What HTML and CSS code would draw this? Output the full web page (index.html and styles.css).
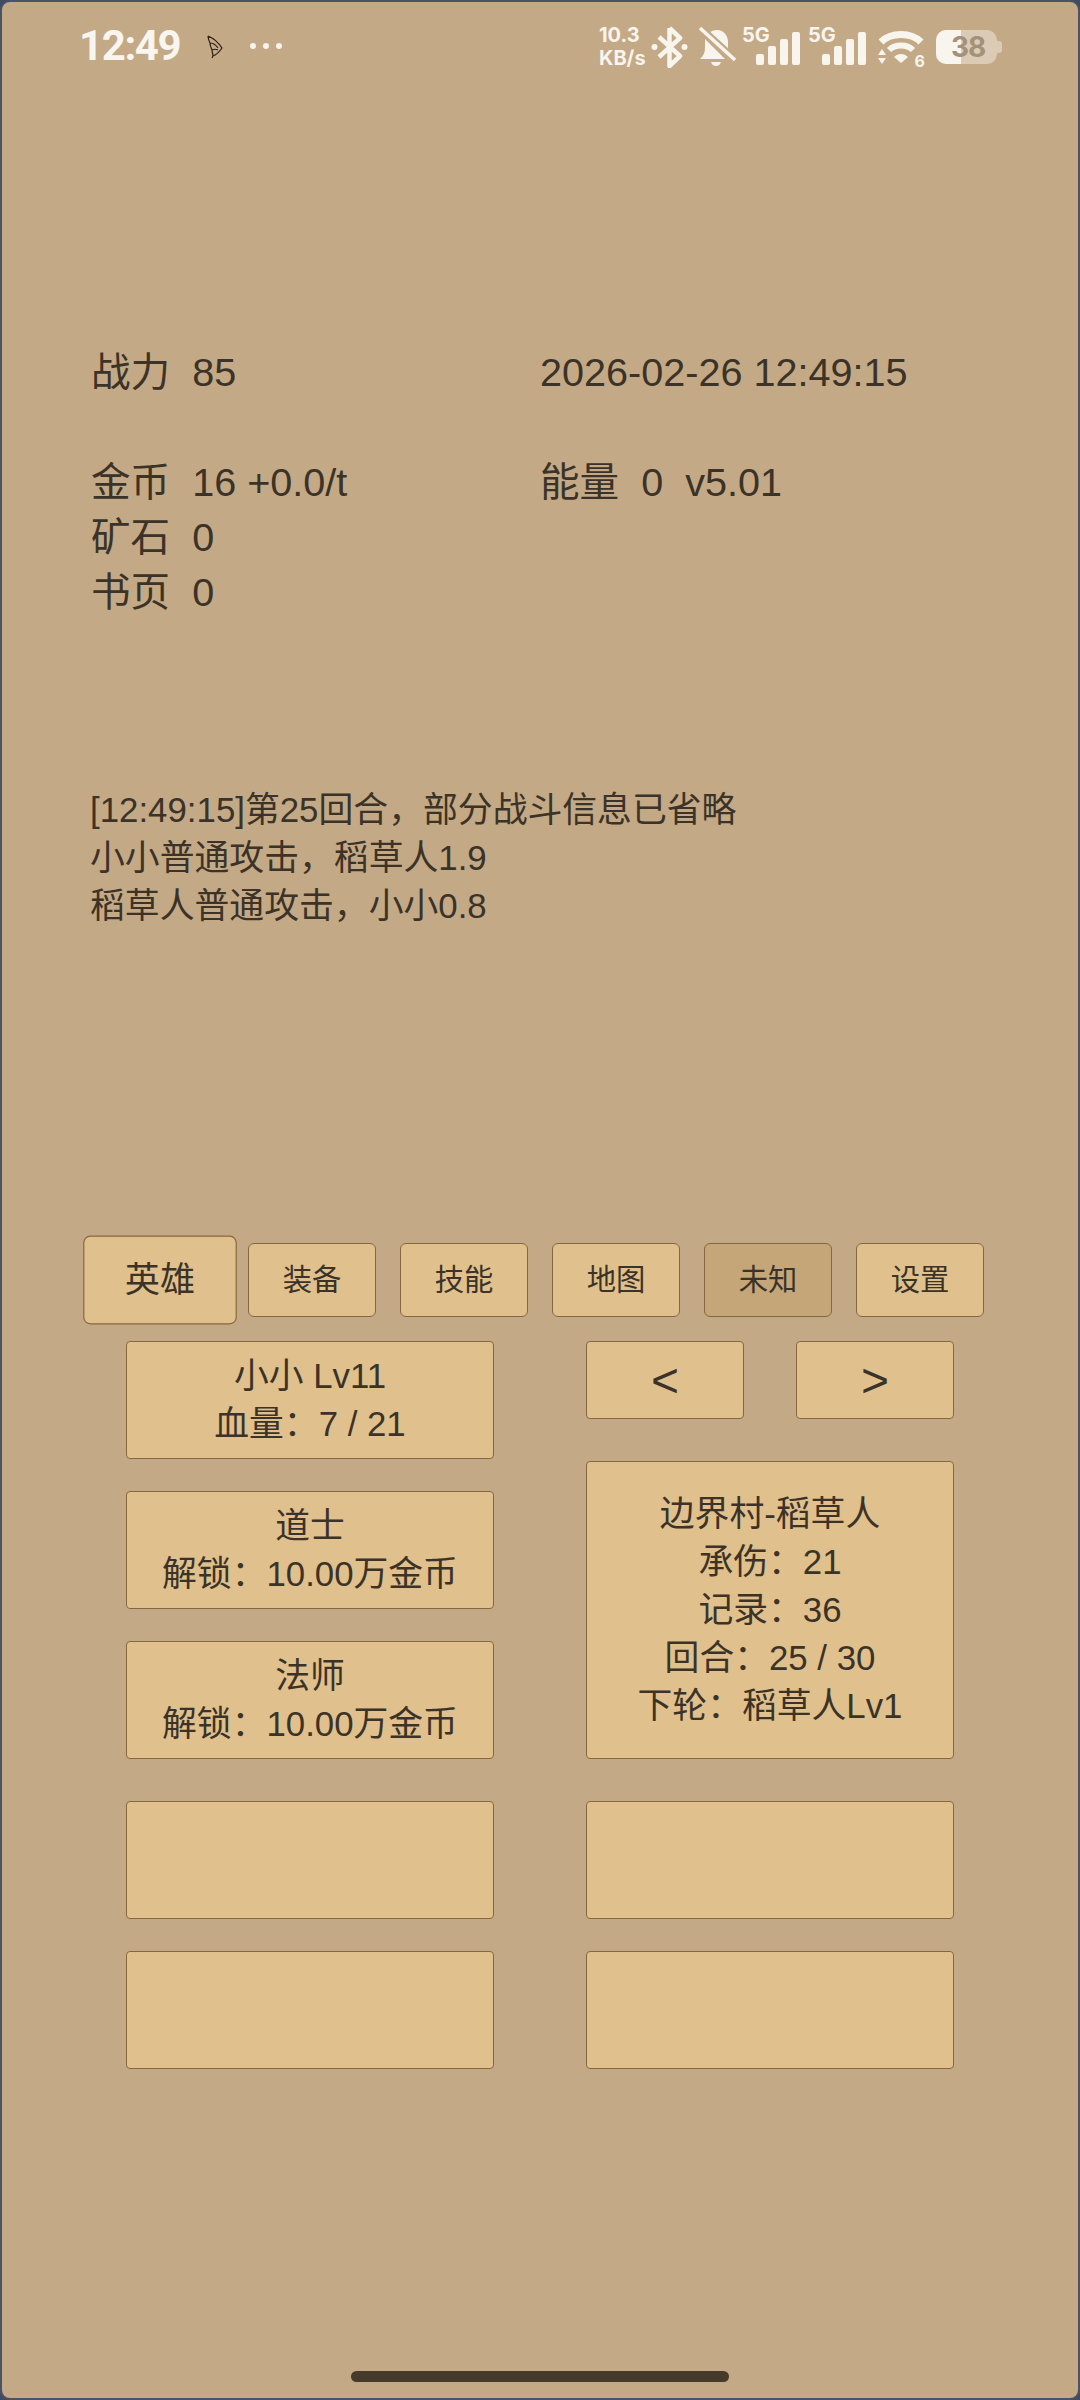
FILE: index.html
```html
<!DOCTYPE html>
<html lang="zh-CN">

<head>
    <meta charset="UTF-8">
    <meta name="viewport" content="width=device-width, initial-scale=1.0">
    <title>小小放置</title>
    <link rel="stylesheet" href="styles.css">
</head>

<body>
    <div class="screen">
        <!-- Status bar -->
        <div class="status-bar">
            <div class="status-left">
                <span class="clock">12:49</span>
                <svg class="wing" width="16" height="24" viewBox="0 0 16 24">
                    <path d="M1 1 C6 3 11 7 15 13 C13 16 11 19 6 21 L5 23 M1 1 C1 4 2 6 3 8 C3 11 4 13 5 15 C5 17 6 19 6 21 M3 8 C6 8 9 10 11 13 M5 15 C7 14 9 14 11 15" fill="none" stroke="#2b2116" stroke-width="1.2"/>
                </svg>
                <div class="dots"><i></i><i></i><i></i></div>
            </div>
            <div class="status-right">
                <div class="speed"><span>10.3</span><span>KB/s</span></div>
                <svg class="icon-bt" width="37" height="42" viewBox="0 0 37 42">
                    <path d="M18.500 2 L18.500 40 L29 30 L8 11 M18.500 2 L29 12 L8 31" fill="none" stroke="#f8f4ee" stroke-width="4.500" stroke-linejoin="round"/>
                    <circle cx="3.500" cy="21" r="3" fill="#f8f4ee"/>
                    <circle cx="33.500" cy="21" r="3" fill="#f8f4ee"/>
                </svg>
                <svg class="icon-bell" width="37" height="42" viewBox="0 0 37 42">
                    <path d="M18 4 C25 4 29 10 29 16 L29 26 L10 7 C12 5 15 4 18 4 Z M6 13 L26 33 L1 33 C4 30 6 27 6 22 Z M12 36 L22 36 C21 39 19 40 17 40 C15 40 13 39 12 36 Z" fill="#f8f4ee"/>
                    <path d="M1 2 L36 34" stroke="#c4a986" stroke-width="8"/>
                    <path d="M1 2 L36 34" stroke="#f8f4ee" stroke-width="3.500"/>
                </svg>
                <div class="signal">
                    <span class="net">5G</span>
                    <div class="bars"><i class="b1"></i><i class="b2"></i><i class="b3"></i><i class="b4"></i></div>
                </div>
                <div class="signal">
                    <span class="net">5G</span>
                    <div class="bars"><i class="b1"></i><i class="b2"></i><i class="b3"></i><i class="b4"></i></div>
                </div>
                <div class="wifi">
                    <svg width="46" height="36" viewBox="0 0 46 36">
                        <path d="M3 13 C13 3 33 3 43 13" fill="none" stroke="#f8f4ee" stroke-width="7"/>
                        <path d="M11 21 C17 15 29 15 35 21" fill="none" stroke="#f8f4ee" stroke-width="6"/>
                        <path d="M16 28 C20 24 26 24 30 28 L23 34 Z" fill="#f8f4ee"/>
                        <path d="M0 26 L4 20 L8 26 Z M0 29 L8 29 L4 35 Z" fill="#f8f4ee"/>
                    </svg>
                    <span class="wifi-num">6</span>
                </div>
                <div class="battery">
                    <div class="battery-fill"></div>
                    <span class="battery-num">38</span>
                    <div class="battery-tip"></div>
                </div>
            </div>
        </div>

        <!-- Stats -->
        <div class="stats">
            <div class="stat-col">
                <div>战力&nbsp;&nbsp;85</div>
                <div>&nbsp;</div>
                <div>金币&nbsp;&nbsp;16 +0.0/t</div>
                <div>矿石&nbsp;&nbsp;0</div>
                <div>书页&nbsp;&nbsp;0</div>
            </div>
            <div class="stat-col">
                <div>2026-02-26 12:49:15</div>
                <div>&nbsp;</div>
                <div>能量&nbsp;&nbsp;0&nbsp;&nbsp;v5.01</div>
            </div>
        </div>

        <!-- Battle log -->
        <div class="log">
            <div>[12:49:15]第25回合，部分战斗信息已省略</div>
            <div>小小普通攻击，稻草人1.9</div>
            <div>稻草人普通攻击，小小0.8</div>
        </div>

        <!-- Tabs -->
        <div class="tabs">
            <button class="tab active">英雄</button>
            <button class="tab">装备</button>
            <button class="tab">技能</button>
            <button class="tab">地图</button>
            <button class="tab locked">未知</button>
            <button class="tab">设置</button>
        </div>

        <div class="panels">
            <div class="column">
                <div class="card">
                    <div>小小 Lv11</div>
                    <div>血量：7 / 21</div>
                </div>
                <div class="card">
                    <div>道士</div>
                    <div>解锁：10.00万金币</div>
                </div>
                <div class="card">
                    <div>法师</div>
                    <div>解锁：10.00万金币</div>
                </div>
                <div class="card spaced"></div>
                <div class="card"></div>
            </div>
            <div class="column">
                <div class="nav">
                    <button class="nav-btn">&lt;</button>
                    <button class="nav-btn">&gt;</button>
                </div>
                <div class="card stage spaced">
                    <div>边界村-稻草人</div>
                    <div>承伤：21</div>
                    <div>记录：36</div>
                    <div>回合：25 / 30</div>
                    <div>下轮：稻草人Lv1</div>
                </div>
                <div class="card spaced"></div>
                <div class="card"></div>
            </div>
        </div>

        <div class="home-bar"></div>
    </div>
</body>

</html>
```

FILE: styles.css
```css
* {
    box-sizing: border-box;
}

html,
body {
    margin: 0;
    padding: 0;
    background-color: #3f4a63;
}

body {
    font-family: "Liberation Sans", "Noto Sans CJK SC", sans-serif;
    color: #3b3327;
}

.screen {
    position: relative;
    width: 1080px;
    height: 2400px;
    padding-top: 2px;
    background-color: #c4a986;
    border: 2px solid #4a5266;
    border-radius: 10px;
    overflow: hidden;
}

/* Status bar */
.status-bar {
    display: flex;
    justify-content: space-between;
    align-items: flex-start;
    height: 70px;
    padding: 19px 81px 0 77px;
    color: #f8f4ee;
}

.status-left {
    display: flex;
    align-items: center;
    height: 46px;
}

.clock {
    font-family: Roboto, sans-serif;
    font-size: 42px;
    font-weight: 700;
    letter-spacing: -1.4px;
    line-height: 46px;
    color: #f9f5ef;
}

.wing {
    margin-left: 27px;
    margin-top: 2px;
}

.dots {
    display: flex;
    gap: 7px;
    margin-left: 27px;
}

.dots i {
    width: 6px;
    height: 6px;
    border-radius: 50%;
    background-color: #f8f4ee;
}

.status-right {
    display: flex;
    align-items: flex-start;
    height: 46px;
}

.speed {
    display: flex;
    flex-direction: column;
    width: 52px;
    font-family: Inter, sans-serif;
    font-size: 20px;
    font-weight: 700;
    line-height: 23px;
    margin-top: 1px;
}

.icon-bt {
    margin-top: 3px;
}

.icon-bell {
    margin: 3px 0 0 11px;
}

.signal {
    position: relative;
    width: 58px;
    height: 42px;
    margin-left: 6px;
}

.signal + .signal {
    margin-left: 8px;
}

.net {
    position: absolute;
    top: 0;
    left: 0;
    font-family: Inter, sans-serif;
    font-size: 20px;
    font-weight: 700;
    line-height: 24px;
}

.bars {
    position: absolute;
    right: 0;
    bottom: 0;
    display: flex;
    align-items: flex-end;
    gap: 4px;
}

.bars i {
    display: block;
    width: 8px;
    border-radius: 2px;
    background-color: #f8f4ee;
}

.bars .b1 {
    height: 11px;
}

.bars .b2 {
    height: 19px;
}

.bars .b3 {
    height: 26px;
}

.bars .b4 {
    height: 33px;
}

.wifi {
    position: relative;
    width: 46px;
    height: 42px;
    margin: 3px 0 0 12px;
}

.wifi svg {
    display: block;
    margin-top: 3px;
}

.wifi-num {
    position: absolute;
    right: -1px;
    bottom: -1px;
    font-family: Inter, sans-serif;
    font-size: 16px;
    font-weight: 700;
    line-height: 16px;
}

.battery {
    position: relative;
    width: 61px;
    height: 34px;
    margin: 7px 0 0 12px;
    border-radius: 10px;
    background-color: rgba(248, 244, 238, 0.45);
}

.battery-fill {
    width: 25px;
    height: 100%;
    border-radius: 10px 0 0 10px;
    background-color: #f8f4ee;
}

.battery-num {
    position: absolute;
    top: 0;
    left: 15px;
    font-family: Inter, sans-serif;
    font-size: 28px;
    font-weight: 700;
    letter-spacing: -1px;
    line-height: 34px;
    color: #a3917a;
}

.battery-tip {
    position: absolute;
    top: 11px;
    right: -5px;
    width: 5px;
    height: 12px;
    border-radius: 0 3px 3px 0;
    background-color: rgba(248, 244, 238, 0.45);
}

/* Stats */
.stats {
    display: flex;
    margin-top: 271px;
    padding-left: 89px;
    font-size: 39.6px;
    line-height: 55px;
    white-space: nowrap;
}

.stat-col {
    width: 449px;
}

/* Battle log */
.log {
    margin-top: 166px;
    padding-left: 88px;
    font-size: 34.85px;
    line-height: 48px;
}

/* Tabs */
.tabs {
    display: flex;
    gap: 24px;
    margin-top: 313px;
    padding-left: 94px;
}

button {
    font-family: inherit;
    color: inherit;
    cursor: pointer;
}

.tab {
    width: 128px;
    height: 74px;
    padding: 0 0 6px;
    font-size: 29.33px;
    background-color: #e0c08d;
    border: 1.5px solid #85683f;
    border-radius: 6px;
}

.tab.active {
    transform: scale(1.2);
}

.tab.locked {
    background-color: #c4a679;
}

/* Cards */
.panels {
    display: flex;
    gap: 92px;
    margin-top: 24px;
    padding-left: 124px;
}

.column {
    display: flex;
    flex-direction: column;
    gap: 32px;
    width: 368px;
}

.card {
    display: flex;
    flex-direction: column;
    justify-content: center;
    height: 118px;
    font-size: 34.8px;
    line-height: 48px;
    text-align: center;
    background-color: #e0c08d;
    border: 1.5px solid #85683f;
    border-radius: 4px;
}

.card.spaced {
    margin-top: 10px;
}

.card.stage {
    height: 298px;
}

.nav {
    display: flex;
    justify-content: space-between;
}

.nav-btn {
    width: 158px;
    height: 78px;
    padding: 0;
    font-size: 48px;
    background-color: #e0c08d;
    border: 1.5px solid #85683f;
    border-radius: 4px;
}

.home-bar {
    position: absolute;
    left: 349px;
    bottom: 16px;
    width: 378px;
    height: 11px;
    border-radius: 6px;
    background-color: #463a2a;
}
```
